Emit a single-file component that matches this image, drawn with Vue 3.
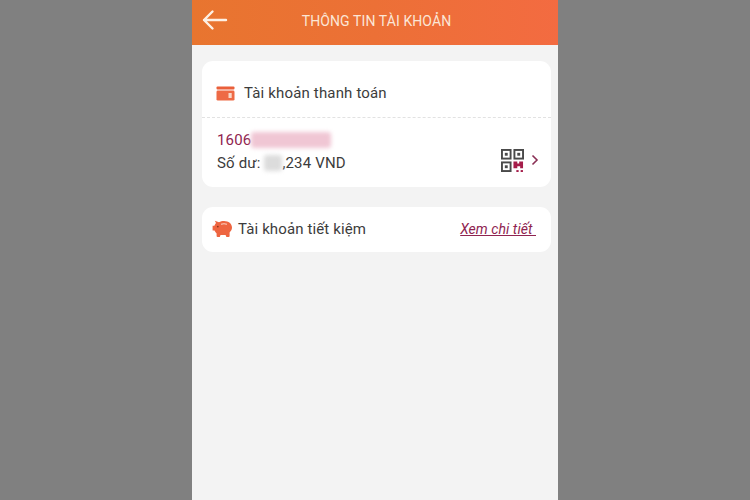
<script setup>
const title = 'THÔNG TIN TÀI KHOẢN'
</script>

<template>
  <div class="stage">
    <div class="phone">
      <header class="bar">
        <svg class="back" width="28" height="22" viewBox="0 0 28 22" fill="none">
          <path d="M25 11H3M11.500 2.500 3 11l8.500 8.500" stroke="#fdf0e4" stroke-width="2.400" stroke-linecap="round" stroke-linejoin="round" />
        </svg>
        <span class="title">{{ title }}</span>
      </header>
      <main class="body">
        <section class="card pay">
          <div class="head">
            <svg class="wallet" width="19" height="15" viewBox="0 0 19 15">
              <rect x="0.5" y="0.5" width="18" height="3" rx="1" fill="#ea5f3a" />
              <rect x="0.5" y="4.6" width="18" height="10" rx="1.4" fill="#ee6a45" />
              <rect x="12.5" y="7" width="3.2" height="5" fill="#f9d8c8" />
            </svg>
            <span>Tài khoản thanh toán</span>
          </div>
          <div class="detail">
            <div class="info">
              <div class="number">1606<span class="blur-num"></span></div>
              <div class="balance">Số dư: <span class="blur-bal"></span>,234 VND</div>
            </div>
            <svg class="qr" width="23" height="23" viewBox="0 0 24 24">
              <g fill="none" stroke="#4a4a4a" stroke-width="2">
                <rect x="1" y="1" width="9" height="9" />
                <rect x="14" y="1" width="9" height="9" />
                <rect x="1" y="14" width="9" height="9" />
              </g>
              <g fill="#4a4a4a">
                <rect x="4" y="4" width="3" height="3" />
                <rect x="17" y="4" width="3" height="3" />
                <rect x="4" y="17" width="3" height="3" />
              </g>
              <path d="M13 13h4v2h2v-2h4v7h-3v-2h-3v2h-4z" fill="#a51d4a" />
              <rect x="16" y="22" width="2.4" height="2" fill="#a51d4a" />
              <rect x="20.5" y="22" width="2.4" height="2" fill="#a51d4a" />
            </svg>
            <svg class="chev" width="8" height="12" viewBox="0 0 8 12" fill="none">
              <path d="M1.500 1.500 6 6l-4.500 4.500" stroke="#8a2f55" stroke-width="1.600" />
            </svg>
          </div>
        </section>
        <section class="card save">
          <svg class="pig" width="22" height="18" viewBox="0 0 22 18">
            <path d="M4 3 2.800.8 7 2.200C8.500 1.400 10 1 12 1c4.600 0 8 2.800 8 6.600 0 2-1 3.600-2.400 4.800V16a1 1 0 0 1-1 1h-2.200l-.8-2H8.500l-.7 2H5.600a1 1 0 0 1-1-1v-2.600C3.600 12.500 3 11.600 2.500 10.500H.6V5.800h1.800C2.800 4.800 3.300 3.800 4 3Z" fill="#ee6540" />
            <path d="M9 4.300c2-.7 4-.7 6 0" stroke="#fbd5c5" stroke-width="1.100" fill="none" />
            <circle cx="5.800" cy="6.600" r=".9" fill="#8f3419" />
          </svg>
          <span class="save-label">Tài khoản tiết kiệm</span>
          <a class="more">Xem chi tiết&nbsp;</a>
        </section>
      </main>
    </div>
  </div>
</template>

<style scoped>
.stage {
  width: 750px;
  height: 500px;
  background: #808080;
  display: flex;
  justify-content: center;
  overflow: hidden;
  font-family: Roboto, "Noto Sans", sans-serif;
}
.phone {
  width: 366px;
  height: 500px;
  background: #f3f3f3;
  display: flex;
  flex-direction: column;
}
.bar {
  height: 45px;
  flex: none;
  box-sizing: border-box;
  padding: 0 0 4px 3px;
  background: linear-gradient(90deg, #e8752f 0%, #ec7036 50%, #f36b41 100%);
  display: flex;
  align-items: center;
  justify-content: center;
  position: relative;
}
.back {
  position: absolute;
  left: 9px;
  top: 9px;
}
.title {
  color: #fbe6d6;
  font-size: 14px;
  letter-spacing: 0.1px;
}
.body {
  padding: 16px 7px 0 10px;
  display: flex;
  flex-direction: column;
  gap: 20px;
}
.card {
  background: #fff;
  border-radius: 11px;
}
.pay {
  height: 126px;
  display: flex;
  flex-direction: column;
}
.head {
  height: 57px;
  flex: none;
  box-sizing: border-box;
  padding: 8px 0 0 14px;
  display: flex;
  align-items: center;
  gap: 9px;
  font-size: 15px;
  letter-spacing: 0.16px;
  color: #3c3c3c;
  border-bottom: 1px dashed #e2e2e2;
}
.detail {
  flex: 1;
  display: flex;
  align-items: flex-start;
  padding: 12px 12px 0 15px;
}
.info {
  flex: 1;
}
.number {
  display: flex;
  align-items: center;
  height: 20px;
  font-size: 15px;
  letter-spacing: 0.16px;
  color: #8f2450;
}
.blur-num {
  display: block;
  width: 80px;
  height: 16px;
  background: #f0c6d4;
  border-radius: 3px;
  filter: blur(2px);
}
.balance {
  display: flex;
  align-items: center;
  height: 22px;
  margin-top: 2px;
  font-size: 15px;
  letter-spacing: 0.16px;
  color: #3c3c3c;
  white-space: pre;
}
.blur-bal {
  display: block;
  width: 18px;
  height: 16px;
  background: #dcdcdc;
  border-radius: 3px;
  filter: blur(2px);
}
.qr {
  margin-top: 19px;
  margin-right: 7px;
}
.chev {
  margin-top: 24px;
}
.save {
  height: 45px;
  display: flex;
  align-items: center;
  padding: 0 15px 0 10px;
  font-size: 15px;
  letter-spacing: 0.12px;
  color: #3c3c3c;
}
.pig {
  margin-right: 4px;
  margin-top: -2px;
}
.save-label {
  flex: 1;
  margin-top: -1px;
}
.more {
  font-size: 14px;
  font-style: italic;
  letter-spacing: 0.06px;
  color: #8f2450;
  text-decoration: underline;
  margin-top: -1px;
}
</style>
